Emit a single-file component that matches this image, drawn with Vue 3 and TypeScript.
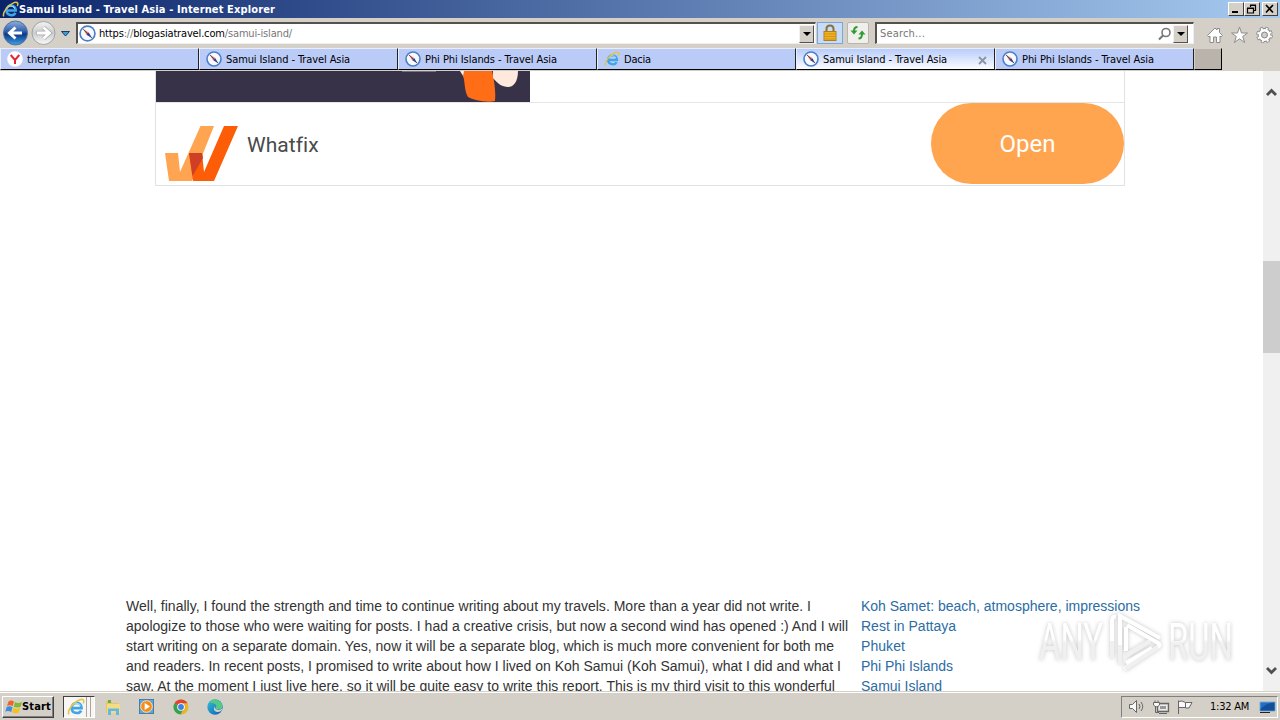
<script setup lang="ts">
import type { Directive } from 'vue'

interface Tab {
  title: string
  icon: 'compass' | 'yandex' | 'ie'
  width: number
  active?: boolean
}

const tabs: Tab[] = [
  { title: 'therpfan', icon: 'yandex', width: 43 },
  { title: 'Samui Island - Travel Asia', icon: 'compass', width: 124 },
  { title: 'Phi Phi Islands - Travel Asia', icon: 'compass', width: 132 },
  { title: 'Dacia', icon: 'ie', width: 27 },
  { title: 'Samui Island - Travel Asia', icon: 'compass', width: 124, active: true },
  { title: 'Phi Phi Islands - Travel Asia', icon: 'compass', width: 132 },
]

const lines = [
  { text: 'Well, finally, I found the strength and time to continue writing about my travels. More than a year did not write. I', width: 685 },
  { text: 'apologize to those who were waiting for posts. I had a creative crisis, but now a second wind has opened :) And I will', width: 722 },
  { text: 'start writing on a separate domain. Yes, now it will be a separate blog, which is much more convenient for both me', width: 708 },
  { text: 'and readers. In recent posts, I promised to write about how I lived on Koh Samui (Koh Samui), what I did and what I', width: 715 },
  { text: 'saw. At the moment I just live here, so it will be quite easy to write this report. This is my third visit to this wonderful', width: 709 },
]

const links = [
  { text: 'Koh Samet: beach, atmosphere, impressions', width: 279 },
  { text: 'Rest in Pattaya', width: 95 },
  { text: 'Phuket', width: 44 },
  { text: 'Phi Phi Islands', width: 92 },
  { text: 'Samui Island', width: 81 },
]

// Spreads the letters of a label so that it takes the given width.
const vFit: Directive<HTMLElement, number> = {
  mounted(el, { value }) {
    const natural = el.getBoundingClientRect().width
    const count = (el.textContent ?? '').length
    el.style.letterSpacing = `${(value - natural) / count}px`
  },
}
</script>

<template>
  <div class="screen">
    <svg class="defs" width="0" height="0">
      <defs>
        <linearGradient id="blueBall" x1="0" y1="0" x2="0" y2="1">
          <stop offset="0" stop-color="#8fb0dc" /><stop offset=".45" stop-color="#2a5cab" />
          <stop offset=".55" stop-color="#0c3787" /><stop offset="1" stop-color="#3fa2ea" />
        </linearGradient>
        <linearGradient id="greyBall" x1="0" y1="0" x2="0" y2="1">
          <stop offset="0" stop-color="#f4f4f4" /><stop offset=".5" stop-color="#c9cbcd" /><stop offset="1" stop-color="#fafafa" />
        </linearGradient>
        <linearGradient id="edgeFill" x1="0" y1="0" x2="1" y2="1">
          <stop offset="0" stop-color="#35c1d8" /><stop offset="1" stop-color="#0b5cb5" />
        </linearGradient>
        <symbol id="compass" viewBox="0 0 16 16">
          <circle cx="8" cy="8" r="7" fill="#f7f9fc" stroke="#4b7fc8" stroke-width="1.6" />
          <path d="M3.7 3.6L9.2 7L7 9.1Z" fill="#e8744c" />
          <path d="M12.4 12.5L7 9.1L9.2 7Z" fill="#28408f" />
          <path d="M4 4L12 12" stroke="#4a3a66" stroke-width=".8" />
        </symbol>
        <symbol id="yandex" viewBox="0 0 16 16">
          <circle cx="8" cy="8" r="7.8" fill="#fff" />
          <path d="M3.7 4L8 9L12.3 4M8 8.5V13" fill="none" stroke="#e32636" stroke-width="2" />
        </symbol>
        <symbol id="ie" viewBox="0 0 16 16">
          <path d="M4.300 9H13C13.2 2.800 4.300 2.800 4.100 8.800C4.100 14 11 14.500 12.600 11.200" fill="none" stroke="#3fa5e6" stroke-width="2.300" />
          <path d="M4.500 6.500C6.500 4 10.500 4 12 7" fill="none" stroke="#a3e3fb" stroke-width="1" />
          <path d="M1.800 14.500C-.4 11.500 6 3.500 11.300 1.500C15 .5 15.5 2.500 14.400 4.800" fill="none" stroke="#e6c34a" stroke-width="1.400" />
        </symbol>
      </defs>
    </svg>

    <header class="titlebar">
      <svg class="title-icon" width="17" height="17"><use href="#ie" /></svg>
      <span v-fit="256" class="title">Samui Island - Travel Asia - Internet Explorer</span>
      <div class="window-buttons">
        <i class="wb"><svg width="14" height="12"><path d="M3 9H9" stroke="#000" stroke-width="2" /></svg></i>
        <i class="wb"><svg width="14" height="12"><path d="M5.500 4V2.500H10.500V7.500H9M5 2H11M2.500 5.500H8.500V10H2.500ZM2 5H9" fill="none" stroke="#000" stroke-width="1.200" /></svg></i>
        <i class="wb close"><svg width="14" height="12"><path d="M3 2L10 9.500M10 2L3 9.500" stroke="#000" stroke-width="1.700" /></svg></i>
      </div>
    </header>

    <div class="toolbar">
      <svg class="nav" width="76" height="30">
        <circle cx="15.500" cy="15" r="12" fill="url(#blueBall)" stroke="#54719c" />
        <path d="M22 15H10M15.500 9.500L9.500 15L15.500 20.500" fill="none" stroke="#fff" stroke-width="3" />
        <circle cx="43.500" cy="15" r="11.500" fill="url(#greyBall)" stroke="#a0a2a5" />
        <path d="M36.500 15H48M43.500 9.500L49.500 15L43.500 20.500" fill="none" stroke="#aaa" stroke-width="4.400" />
        <path d="M37 15H48M43.500 9.500L49.500 15L43.500 20.500" fill="none" stroke="#fff" stroke-width="2.800" />
        <path d="M61.500 13.500H69.500L65.500 18Z" fill="#3aa0d8" stroke="#173d70" />
      </svg>
      <div class="address field">
        <svg width="17" height="17"><use href="#compass" /></svg>
        <span v-fit="193" class="url"><em>https</em>://<em>blogasiatravel.com</em>/samui-island/</span>
        <i class="drop"></i>
      </div>
      <div class="tool lock">
        <svg width="16" height="18">
          <path d="M4.500 8V5Q4.500 1.500 8 1.500T11.500 5V8" fill="none" stroke="#8a7238" stroke-width="2" />
          <rect x="2" y="7.500" width="12" height="9" fill="#f0b322" stroke="#b87c12" />
          <path d="M3 10H13M3 12.500H13M3 15H13" stroke="#d09217" />
        </svg>
      </div>
      <div class="tool refresh">
        <svg width="18" height="18">
          <path d="M8.500 3Q5 3 5 7" fill="none" stroke="#2f9c35" stroke-width="2" /><path d="M1.500 6.500H8.500L5 10.500Z" fill="#2f9c35" />
          <path d="M9.500 14.500Q13 14.500 13 10" fill="none" stroke="#2f9c35" stroke-width="2" /><path d="M9.500 10.500H16.500L13 6.500Z" fill="#2f9c35" />
        </svg>
      </div>
      <div class="search field">
        <span v-fit="45">Search...</span>
        <svg width="14" height="14"><circle cx="8" cy="5.500" r="4" fill="none" stroke="#777" stroke-width="1.600" /><path d="M5.200 8.300L1 12.500" stroke="#777" stroke-width="2" /></svg>
        <i class="drop"></i>
      </div>
      <svg class="commands" width="70" height="22" fill="#fff" stroke="#8c8c8c">
        <path d="M1.500 11.500L9 4L11 6V4.500H13.500V8.500L16.500 11.500L15 13L14 12V18.500H10.500V13H7.500V18.500H4V12L3 13Z" />
        <path d="M33.500 3L35.500 9H41.500L36.700 12.500L38.600 18.500L33.500 14.800L28.400 18.500L30.300 12.500L25.500 9H31.500Z" />
        <circle cx="58.500" cy="11" r="6.500" fill="none" stroke-width="3.600" stroke-dasharray="3 2.100" />
        <circle cx="58.500" cy="11" r="5.200" fill="none" stroke-width="3.400" />
        <circle cx="58.500" cy="11" r="6.300" fill="none" stroke="#fff" stroke-width="2.400" stroke-dasharray="1.700 3.250" stroke-dashoffset="-.6" />
        <circle cx="58.500" cy="11" r="4.600" fill="none" stroke="#fff" stroke-width="2.600" />
        <circle cx="58.500" cy="11" r="2.900" fill="#d4d0c8" />
      </svg>
    </div>

    <nav class="tabs">
      <div v-for="(tab, i) in tabs" :key="i" class="tab" :class="{ active: tab.active }">
        <svg width="16" height="16"><use :href="'#' + tab.icon" /></svg>
        <span v-fit="tab.width">{{ tab.title }}</span>
        <svg v-if="tab.active" class="x" width="9" height="9"><path d="M1 1L8 8M8 1L1 8" stroke="#8c93a5" stroke-width="1.800" /></svg>
      </div>
      <div class="new-tab"></div>
    </nav>

    <main class="viewport">
      <div class="page">
        <section class="ad">
          <div class="ad-top">
            <svg width="374" height="31">
              <rect width="374" height="31" fill="#373248" />
              <path d="M246 0H280V1H246Z" fill="#77707a" />
              <path d="M304 0H309V8Z" fill="#fff0e8" />
              <path d="M308 0H336C338 8 340 20 339 30C331 32 317 29 312 26C308 20 309 9 307 5Z" fill="#ff6d16" />
              <path d="M337 0H362C362 10 358 16 352 16C346 16 341 12 337 7Z" fill="#ffe8dc" />
            </svg>
          </div>
          <div class="ad-bottom">
            <svg class="logo" width="74" height="56">
              <path d="M0 27H13L15 46L35.500 0H49L27 55H4Z" fill="#ffa552" />
              <path d="M24 27H37L39 46L59 0H73L49 55H28Z" fill="#fc5d06" />
              <path d="M24 27H37L38 32L27.500 50Z" fill="#cf3f25" />
            </svg>
            <span v-fit="71" class="brand">Whatfix</span>
            <div class="open"><span v-fit="56">Open</span></div>
          </div>
        </section>
        <section class="article">
          <div class="text">
            <div v-for="line in lines" :key="line.text"><span v-fit="line.width">{{ line.text }}</span></div>
          </div>
          <div class="links">
            <div v-for="link in links" :key="link.text"><a v-fit="link.width">{{ link.text }}</a></div>
          </div>
        </section>
      </div>
      <aside class="scrollbar">
        <svg width="17" height="17"><path d="M4 11L8.500 6.500L13 11" fill="none" stroke="#505050" stroke-width="2.800" /></svg>
        <div class="thumb"></div>
        <svg class="down" width="17" height="17"><path d="M4 6L8.500 10.500L13 6" fill="none" stroke="#505050" stroke-width="2.800" /></svg>
      </aside>
      <svg class="watermark" width="210" height="76">
        <defs>
          <linearGradient id="wm" gradientUnits="userSpaceOnUse" x1="0" y1="14" x2="0" y2="54">
            <stop offset=".45" stop-color="#fff" /><stop offset=".55" stop-color="#eee" />
          </linearGradient>
        </defs>
        <g fill="url(#wm)">
          <text x="9" y="53" textLength="64" lengthAdjust="spacingAndGlyphs">ANY</text>
          <text x="138" y="53" textLength="65" lengthAdjust="spacingAndGlyphs">RUN</text>
        </g>
        <path d="M82 51V14Q82 9 86 10M90 57V9L130 31M96 20V44M97 18L128 36Q131 38 128 40L94 62M97 48L120 34M96 56L122 41" fill="none" stroke="#fff" stroke-width="4" />
        <path d="M82 51V34M90 57V38M97 48L120 34M95 62L128 40" stroke="#eee" stroke-width="4" fill="none" />
      </svg>
    </main>

    <footer class="taskbar">
      <div class="start">
        <svg width="18" height="16">
          <path d="M3.500 2.500Q6 .500 9 2.500L7.700 7Q5 5.500 2 7Z" fill="#ef6324" /><path d="M10 3Q13 5 17 3L15.500 8Q12 9 8.700 7.500Z" fill="#81b933" />
          <path d="M1.700 8Q5 6.500 7.500 8.200L6.200 13Q3 11 .300 12.700Z" fill="#3c8de0" /><path d="M8.500 8.700Q11.500 10.500 15 9L13.700 13.700Q10 15 7 13.500Z" fill="#f6c021" />
        </svg>
        <span v-fit="29">Start</span>
      </div>
      <div class="task"><svg width="18" height="18" viewBox="0 0 16 16"><use href="#ie" /></svg><i></i><i></i></div>
      <div class="pins">
        <svg width="18" height="18">
          <path d="M2 3H7L8 5H15V15H2Z" fill="#e7c65b" /><path d="M4 2H7V5H4Z" fill="#64ae52" /><path d="M3 6H16V15H3Z" fill="#f3dc85" />
          <path d="M4 17V10.500H15V17H12V13H7V17Z" fill="#65b8df" />
        </svg>
        <svg width="18" height="18"><rect x="1.500" y="1.500" width="14" height="14" fill="#61a7dc" stroke="#437fac" /><circle cx="8.500" cy="8.500" r="5.800" fill="#f58b1b" stroke="#ffe0a7" /><path d="M6.700 5L12 8.500L6.700 12Z" fill="#fff" /></svg>
        <svg width="18" height="18">
          <circle cx="9" cy="9" r="7.500" fill="#e7b52a" /><path d="M9 9L2.500 5.200A7.500 7.500 0 0 1 15.500 5.200H9Z" fill="#df4435" />
          <path d="M9 9L2.500 5.200A7.500 7.500 0 0 0 8.500 16.500L12 10Z" fill="#34a154" /><circle cx="9" cy="9" r="3.800" fill="#fff" /><circle cx="9" cy="9" r="2.900" fill="#4280e8" />
        </svg>
        <svg width="18" height="18">
          <circle cx="9" cy="9" r="7.700" fill="url(#edgeFill)" /><path d="M3 4.500Q9-1.500 15 4.500Q17.500 8 15.500 11H9Q12 7 8 5.500Q5 4.500 3 4.500Z" fill="#55c985" />
          <path d="M8.500 8Q6.500 13 11 14Q14 14.500 16 12V11Q12 12.500 9.500 11Q8.500 10 8.500 8Z" fill="#d4d0c8" />
        </svg>
      </div>
      <div class="tray">
        <svg width="68" height="18" fill="#f8f8f8" stroke="#666">
          <path d="M2.500 6.500H5.500L9.500 2.500V14.500L5.500 10.500H2.500Z" /><path d="M12 6Q14 8.500 12 11M14 4Q17.500 8.500 14 13" fill="none" />
          <path d="M30.500 5.500H41.500V13.500H30.500Z" fill="#ddd" stroke-width="1.300" /><path d="M32.500 7.500H39.500V11.500H32.500Z" fill="#999" stroke="#eee" />
          <path d="M32 15.500H40M28.500 8V14.500H32" fill="none" /><path d="M26.500 4.500H32.500V7Q29.500 10.500 26.500 7ZM28 2.500V4.500M31 2.500V4.500" />
          <path d="M51.500 16V2.500M51.500 3.500Q55 2 58.500 4.500H65L62 10H58.500V9.500H51.500M58.500 4.500V10" />
        </svg>
        <span v-fit="39">1:32 AM</span>
        <svg width="18" height="14"><path d="M1 2H16V11H1Z" fill="#206dc4" stroke="#7ba8d2" /><path d="M1.500 9Q8 2.500 15.500 2.500V10.500H1.500Z" fill="#134e9a" /><path d="M1 12.500H11" stroke="#222" /></svg>
      </div>
    </footer>
  </div>
</template>

<style>
html, body { margin: 0; overflow: hidden; }
</style>

<style scoped>
.screen { position: relative; width: 1280px; height: 720px; display: flex; flex-direction: column; overflow: hidden; background: #d4d0c8; font: 11px/14px "DejaVu Sans Condensed", "DejaVu Sans", sans-serif; color: #000; }
.screen * { box-sizing: border-box; }
.defs { position: absolute; }
svg { display: block; flex: none; }
span, a { display: inline-block; white-space: nowrap; }
.titlebar { height: 18px; display: flex; align-items: center; padding: 0 2px; background: linear-gradient(90deg, #0a246a, #a6caf0); }
.title { margin-left: 0; padding-top: 1px; color: #fff; font-weight: bold; }
.window-buttons { display: flex; margin-left: auto; }
.wb { width: 16px; height: 14px; background: #d4d0c8; border: 1px solid; border-color: #fff #404040 #404040 #fff; }
.wb.close { margin-left: 2px; }
.toolbar { height: 30px; display: flex; align-items: flex-start; }
.field { display: flex; align-items: center; background: #fff; border: 2px solid; border-color: #55524d #eee #eee #55524d; border-right-width: 1px; border-bottom-width: 1px; margin-top: 4px; height: 22px; color: #777; }
.field span { padding-top: 1px; }
.address { width: 740px; padding-left: 1px; }
.url { margin-left: 3px; }
.url em { font-style: normal; color: #000; }
.drop { width: 15px; height: 18px; background: #d4d0c8; border: 1px solid; border-color: #f4f2ee #55524d #55524d #f4f2ee; margin-left: auto; display: flex; align-items: center; justify-content: center; }
.drop::after { content: ""; border: 4px solid transparent; border-top-color: #000; border-bottom: 0; }
.address .drop { margin-right: 1px; }
.tool { height: 22px; margin-top: 4px; display: flex; align-items: center; justify-content: center; }
.lock { width: 26px; margin-left: 1px; background: #c6dcf7; border: 1px solid #7aa6dc; }
.refresh { width: 22px; margin-left: 4px; background: #f0efec; border: 1px solid #b9b5ad; border-radius: 2px; }
.search { width: 319px; margin-left: 6px; padding-left: 3px; }
.search svg { margin-left: auto; }
.search .drop { margin: 0 5px 0 1px; }
.commands { margin: 6px 0 0 12px; }
.tabs { height: 23px; display: flex; }
.tab { width: 199px; height: 22px; display: flex; align-items: center; padding-left: 6px; background: #bacbf7; border: 1px solid; border-color: #e8eefc #222 #000 #e8eefc; }
.tab span { margin-left: 4px; padding-top: 2px; }
.tab.active { background: linear-gradient(#b9cdfb, #fafcff); border-bottom-color: #000; }
.x { margin: 2px 7px 0 auto; }
.new-tab { width: 28px; height: 22px; background: #bab3ac; border: 1px solid #d4d0c8; border-right: 1px solid #000; border-bottom-color: #000; }
.viewport { position: relative; height: 620px; display: flex; background: #fff; }
.page { width: 1263px; overflow: hidden; }
.ad { width: 970px; margin-left: 155px; height: 115px; border: 1px solid #e0e3e6; border-top: 0; }
.ad-top { height: 32px; border-bottom: 1px solid #e3e6e9; }
.ad-bottom { height: 82px; display: flex; }
.logo { margin: 23px 0 0 9px; }
.brand { margin: 30px 0 0 8px; font: 21px/24px Roboto, sans-serif; color: #4a4a4a; }
.open { width: 193px; height: 81px; margin-left: auto; border-radius: 41px; background: #ffa550; color: #fff; display: flex; align-items: center; justify-content: center; font: 24px/28px Roboto, sans-serif; }
.article { display: flex; margin: 410px 0 0 126px; font: 14px/20px "Liberation Sans", Arial, sans-serif; color: #333; }
.article div div { height: 20px; }
.text { width: 735px; }
.links { color: #2b6ca5; }
.scrollbar { width: 17px; height: 620px; background: #f0f0f0; display: flex; flex-direction: column; padding: 13px 0 12px; }
.thumb { height: 92px; margin-top: 160px; background: #cdcdcd; }
.down { margin-top: auto; }
.watermark { position: absolute; left: 1030px; top: 536px; overflow: visible; font: 52px Roboto, sans-serif; filter: drop-shadow(0 0 2px #bbb); opacity: .85; }
.taskbar { height: 29px; display: flex; align-items: center; padding: 1px 2px 0 2px; border-top: 1px solid #d4d0c8; box-shadow: inset 0 1px #fff; }
.start { width: 52px; height: 22px; display: flex; align-items: center; padding-left: 2px; font-weight: bold; border: 1px solid; border-color: #fff #404040 #404040 #fff; box-shadow: inset -1px -1px #808080; }
.start span { margin-left: -1px; }
.task { width: 32px; height: 22px; margin-left: 9px; display: flex; align-items: center; padding-left: 3px; background: #f7f6f3; border: 1px solid; border-color: #404040 #fff #fff #404040; }
.task i { width: 3px; height: 20px; border-left: 1px solid #aaa69e; margin-left: 1px; }
.pins { display: flex; gap: 16px; margin-left: 9px; }
.tray { width: 157px; height: 22px; margin-left: auto; display: flex; align-items: center; padding-left: 5px; border: 1px solid; border-color: #808080 #fff #fff #808080; }
.tray span { margin: 0 auto 0 15px; padding-top: 1px; }
</style>
